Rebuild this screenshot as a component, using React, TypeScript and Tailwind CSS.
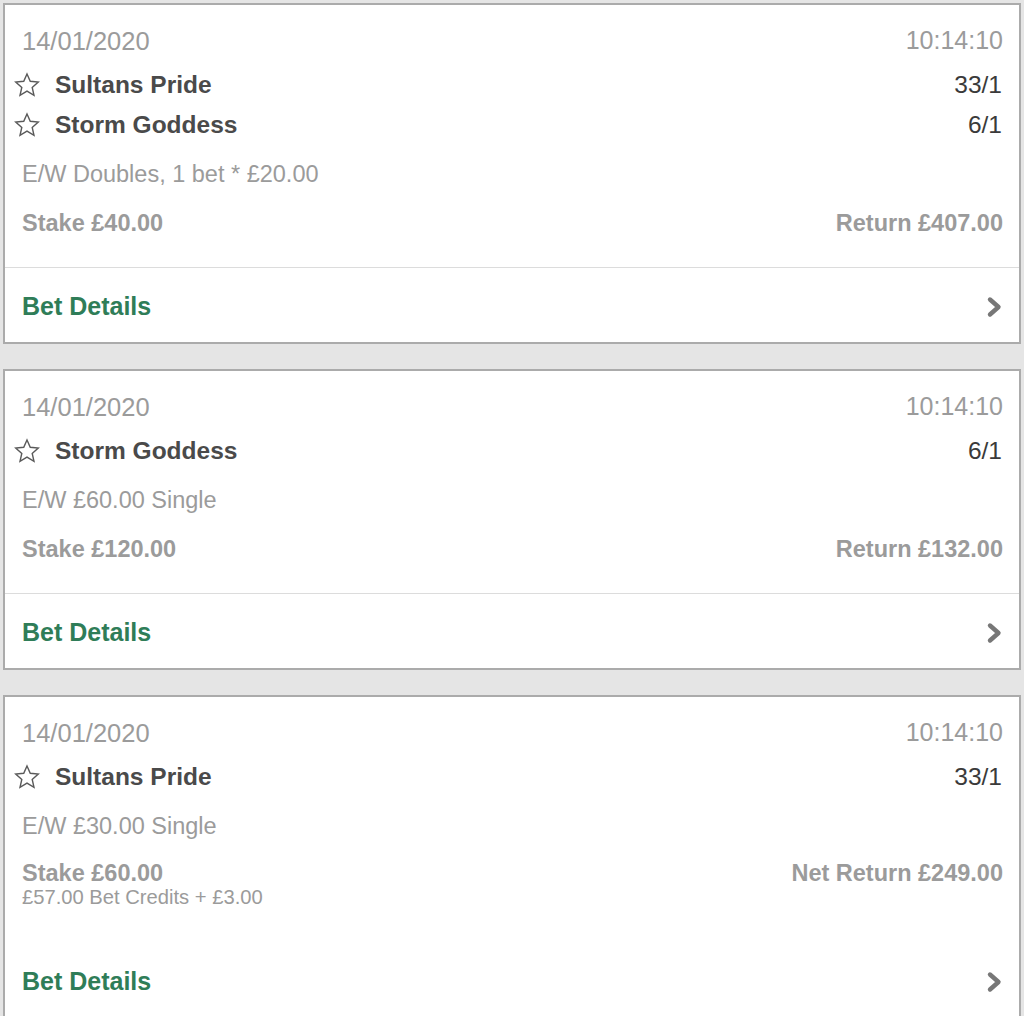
import React from "react";

type Sel = { name: string; odds: string };
type Bet = {
  sels: Sel[];
  type: string;
  stake: string;
  ret: string;
  credits?: string;
};

const bets: Bet[] = [
  {
    sels: [
      { name: "Sultans Pride", odds: "33/1" },
      { name: "Storm Goddess", odds: "6/1" },
    ],
    type: "E/W Doubles, 1 bet * £20.00",
    stake: "Stake £40.00",
    ret: "Return £407.00",
  },
  {
    sels: [{ name: "Storm Goddess", odds: "6/1" }],
    type: "E/W £60.00 Single",
    stake: "Stake £120.00",
    ret: "Return £132.00",
  },
  {
    sels: [{ name: "Sultans Pride", odds: "33/1" }],
    type: "E/W £30.00 Single",
    stake: "Stake £60.00",
    ret: "Net Return £249.00",
    credits: "£57.00 Bet Credits + £3.00",
  },
];

function Star() {
  return (
    <svg width="26" height="26" viewBox="0 0 24 24" className="shrink-0">
      <path
        d="M12 1.8l3 6.8 7.4.7-5.6 4.9 1.65 7.3L12 17.7l-6.45 3.8 1.65-7.3-5.6-4.9 7.4-.7z"
        fill="none"
        stroke="#5a5a5a"
        strokeWidth="1.3"
        strokeLinejoin="miter"
      />
    </svg>
  );
}

function Chevron() {
  return (
    <svg width="17" height="22" viewBox="0 0 17 22">
      <path
        d="M4 3.5l8.5 7.5-8.5 7.5"
        fill="none"
        stroke="#777777"
        strokeWidth="4.4"
        strokeLinecap="round"
        strokeLinejoin="round"
      />
    </svg>
  );
}

function BetDetailsRow() {
  return (
    <div className="h-[74px] pt-[3px] flex items-center justify-between pl-[17px] pr-[16px]">
      <span className="text-[25px] font-bold text-[#2f7d58]">Bet Details</span>
      <Chevron />
    </div>
  );
}

function Card({ bet }: { bet: Bet }) {
  return (
    <div className="bg-white border-2 border-[#ababab]">
      <div className="pt-[14px] pl-[17px] pr-[16px] h-[60px] flex items-start">
        <div className="h-[44px] flex w-full items-center justify-between text-[25.5px] text-[#9b9b9b]">
          <span>14/01/2020</span>
          <span className="text-[25px]">10:14:10</span>
        </div>
      </div>
      {bet.sels.map((s, i) => (
        <div
          key={i}
          className="h-[40px] flex items-center justify-between pl-[9px] pr-[17px]"
        >
          <div className="flex items-center gap-[15px]">
            <Star />
            <span className="text-[24.5px] font-bold text-[#4a4a4a]">
              {s.name}
            </span>
          </div>
          <span className="text-[24.5px] text-[#3a3a3a]">{s.odds}</span>
        </div>
      ))}
      <div className="h-[58px] pt-[2px] flex items-center pl-[17px] text-[23.5px] text-[#9b9b9b]">
        {bet.type}
      </div>
      {bet.credits ? (
        <>
          <div className="pt-[4px] pl-[17px] pr-[16px] flex justify-between items-start">
            <div className="flex flex-col">
              <span className="h-[28px] leading-[28px] text-[23.5px] font-bold text-[#9b9b9b]">
                {bet.stake}
              </span>
              <span className="h-[20px] leading-[20px] text-[20.2px] text-[#9b9b9b]">
                {bet.credits}
              </span>
            </div>
            <span className="h-[28px] leading-[28px] text-[23.5px] font-bold text-[#9b9b9b]">
              {bet.ret}
            </span>
          </div>
          <div className="h-[36px]" />
          <BetDetailsRow />
        </>
      ) : (
        <>
          <div className="h-[38px] pt-[4px] flex items-center justify-between pl-[17px] pr-[16px] text-[23.5px] font-bold text-[#9b9b9b]">
            <span>{bet.stake}</span>
            <span>{bet.ret}</span>
          </div>
          <div className="h-[26px]" />
          <div className="h-px bg-[#dcdcdc]" />
          <BetDetailsRow />
        </>
      )}
    </div>
  );
}

export default function App() {
  return (
    <div
      className="w-[1024px] h-[1016px] overflow-hidden bg-[#e5e5e5] pt-[3px] pl-[3px] pr-[3px] flex flex-col gap-[25px]"
      style={{ fontFamily: '"Liberation Sans", Arial, sans-serif' }}
    >
      {bets.map((b, i) => (
        <Card key={i} bet={b} />
      ))}
    </div>
  );
}
